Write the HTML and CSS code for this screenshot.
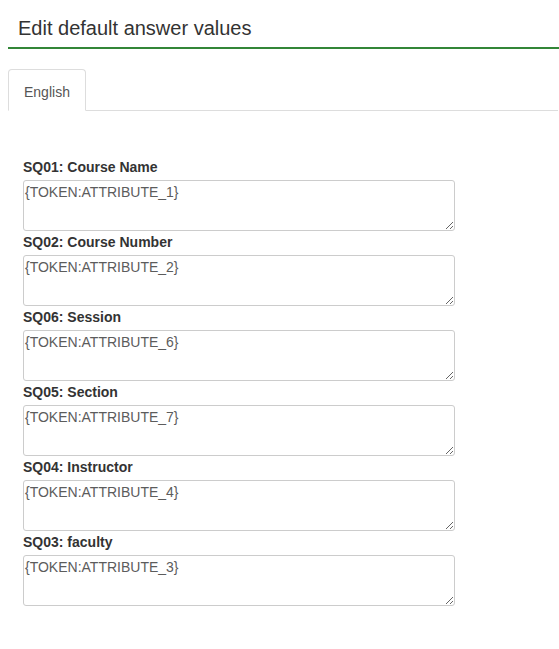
FILE: index.html
```html
<!DOCTYPE html>
<html lang="en">
<head>
<meta charset="utf-8">
<title>Edit default answer values</title>
<link rel="stylesheet" href="styles.css">
</head>
<body>
<div class="page">
  <h3 class="page-title">Edit default answer values</h3>

  <ul class="nav-tabs">
    <li class="tab active"><a href="#lang-en">English</a></li>
  </ul>

  <div class="tab-content" id="lang-en">
    <div class="field">
      <label for="sq01">SQ01: Course Name</label>
      <textarea id="sq01">{TOKEN:ATTRIBUTE_1}</textarea>
    </div>
    <div class="field">
      <label for="sq02">SQ02: Course Number</label>
      <textarea id="sq02">{TOKEN:ATTRIBUTE_2}</textarea>
    </div>
    <div class="field">
      <label for="sq06">SQ06: Session</label>
      <textarea id="sq06">{TOKEN:ATTRIBUTE_6}</textarea>
    </div>
    <div class="field">
      <label for="sq05">SQ05: Section</label>
      <textarea id="sq05">{TOKEN:ATTRIBUTE_7}</textarea>
    </div>
    <div class="field">
      <label for="sq04">SQ04: Instructor</label>
      <textarea id="sq04">{TOKEN:ATTRIBUTE_4}</textarea>
    </div>
    <div class="field">
      <label for="sq03">SQ03: faculty</label>
      <textarea id="sq03">{TOKEN:ATTRIBUTE_3}</textarea>
    </div>
  </div>
</div>
</body>
</html>
```

FILE: styles.css
```css
html, body {
  margin: 0;
  padding: 0;
  background: #fff;
}

body {
  font-family: "Liberation Sans", Arial, sans-serif;
  color: #333;
}

.page {
  padding: 8px 0 0 8px;
}

.page-title {
  margin: 0;
  padding: 9px 0 8px 10px;
  font-size: 20px;
  line-height: 22px;
  font-weight: normal;
  color: #333;
  border-bottom: 2px solid #328637;
}

.nav-tabs {
  display: flex;
  list-style: none;
  margin: 20px 1px 0 0;
  padding: 0;
  border-bottom: 1px solid #ddd;
}

.tab {
  margin-bottom: -1px;
}

.tab a {
  display: block;
  padding: 12px 15px 8px;
  font-size: 14px;
  line-height: 20px;
  color: #555;
  text-decoration: none;
  background: #fff;
  border: 1px solid #ddd;
  border-bottom-color: transparent;
  border-radius: 4px 4px 0 0;
}

.tab-content {
  padding: 46px 0 0 15px;
}

.field label {
  display: block;
  font-size: 14px;
  line-height: 20px;
  font-weight: bold;
  color: #333;
  margin-bottom: 3px;
}

.field textarea {
  display: block;
  box-sizing: border-box;
  width: 432px;
  height: 51px;
  margin: 0 0 1px 0;
  padding: 3px 1px 1px;
  font-family: "Liberation Sans", Arial, sans-serif;
  font-size: 14px;
  color: #5c5c5c;
  background: #fff;
  border: 1px solid #ccc;
  border-radius: 3px;
}
```
